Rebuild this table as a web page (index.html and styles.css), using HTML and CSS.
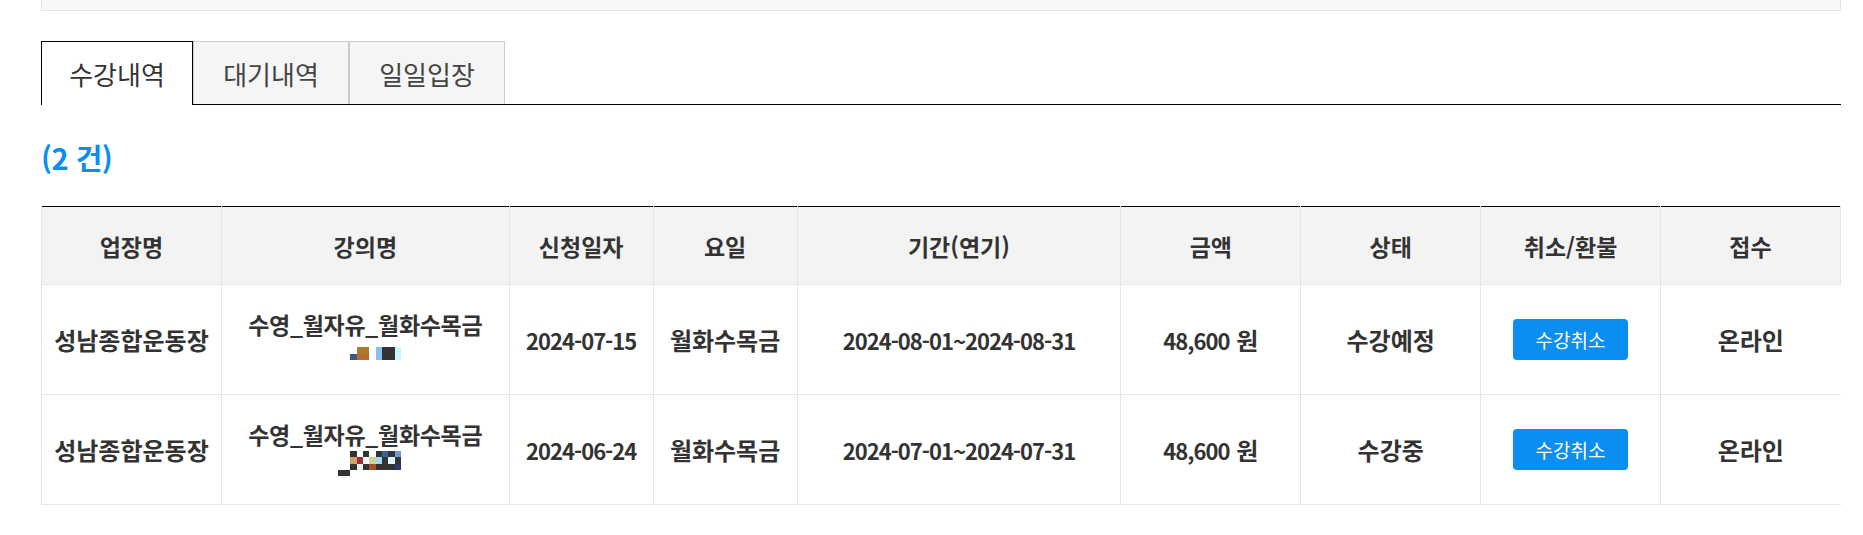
FILE: index.html
```html
<!DOCTYPE html>
<html lang="ko">
<head>
<meta charset="utf-8">
<title>수강내역</title>
<link rel="stylesheet" href="styles.css">
</head>
<body>
<div class="page">
  <div class="search-box"></div>

  <ul class="tabs">
    <li class="tab tab-first active">수강내역</li>
    <li class="tab">대기내역</li>
    <li class="tab">일일입장</li>
  </ul>

  <p class="count">(2 건)</p>

  <table class="list">
    <colgroup>
      <col class="c10"><col class="c16"><col class="c8"><col class="c8"><col class="c18">
      <col class="c10"><col class="c10"><col class="c10"><col class="c10">
    </colgroup>
    <thead>
      <tr>
        <th>업장명</th><th>강의명</th><th>신청일자</th><th>요일</th><th>기간(연기)</th>
        <th>금액</th><th>상태</th><th>취소/환불</th><th>접수</th>
      </tr>
    </thead>
    <tbody>
      <tr>
        <td>성남종합운동장</td>
        <td>
          <div class="lecture">수영_월자유_월화수목금</div>
          <svg class="mosaic" width="72" height="25" viewBox="-1.4 0 11.4 4" preserveAspectRatio="none" shape-rendering="crispEdges">
            <rect x="3" y="1" width="2" height="1" fill="#a87a30"/>
            <rect x="2" y="2" width="1" height="1" fill="#3a5a8a"/>
            <rect x="3" y="2" width="2" height="1" fill="#b86a30"/>
            <rect x="6" y="1" width="1" height="2" fill="#8ac0f0"/>
            <rect x="7" y="1" width="2" height="2" fill="#333"/>
            <rect x="9" y="1" width="1" height="2" fill="#c8f8ff"/>
          </svg>
        </td>
        <td><span class="num">2024-07-15</span></td>
        <td>월화수목금</td>
        <td><span class="num">2024-08-01~2024-08-31</span></td>
        <td><span class="num">48,600</span> 원</td>
        <td>수강예정</td>
        <td><button class="btn-cancel" type="button">수강취소</button></td>
        <td>온라인</td>
      </tr>
      <tr>
        <td>성남종합운동장</td>
        <td>
          <div class="lecture">수영_월자유_월화수목금</div>
          <svg class="mosaic" width="72" height="25" viewBox="-1.4 0 11.4 4" preserveAspectRatio="none" shape-rendering="crispEdges">
            <rect x="2" y="0" width="1" height="1" fill="#333"/>
            <rect x="4" y="0" width="1" height="1" fill="#333"/>
            <rect x="6" y="0" width="1" height="1" fill="#333"/>
            <rect x="7" y="0" width="1" height="1" fill="#3a5f9a"/>
            <rect x="8" y="0" width="1" height="1" fill="#333"/>
            <rect x="9" y="0" width="1" height="1" fill="#6a9ad8"/>
            <rect x="2" y="1" width="1" height="1" fill="#d0a070"/>
            <rect x="3" y="1" width="1" height="1" fill="#a03030"/>
            <rect x="5" y="1" width="1" height="1" fill="#d0d0a0"/>
            <rect x="6" y="1" width="1" height="1" fill="#a0d8f0"/>
            <rect x="7" y="1" width="1" height="1" fill="#333"/>
            <rect x="8" y="1" width="1" height="1" fill="#e0fafa"/>
            <rect x="9" y="1" width="1" height="1" fill="#333"/>
            <rect x="2" y="2" width="1" height="1" fill="#333"/>
            <rect x="3" y="2" width="1" height="1" fill="#e8f8e8"/>
            <rect x="4" y="2" width="1" height="1" fill="#333"/>
            <rect x="5" y="2" width="1" height="1" fill="#a05030"/>
            <rect x="6" y="2" width="3" height="1" fill="#333"/>
            <rect x="9" y="2" width="1" height="1" fill="#303870"/>
            <rect x="0" y="3" width="2" height="1" fill="#333"/>
          </svg>
        </td>
        <td><span class="num">2024-06-24</span></td>
        <td>월화수목금</td>
        <td><span class="num">2024-07-01~2024-07-31</span></td>
        <td><span class="num">48,600</span> 원</td>
        <td>수강중</td>
        <td><button class="btn-cancel" type="button">수강취소</button></td>
        <td>온라인</td>
      </tr>
    </tbody>
  </table>
</div>
</body>
</html>
```

FILE: styles.css
```css
html, body {
  margin: 0;
  padding: 0;
  background: #fff;
}

body {
  font-family: "Noto Sans CJK KR", "Noto Sans", sans-serif;
  color: #333;
}

.page {
  width: 1800px;
  margin-left: 41px;
}

.search-box {
  height: 10px;
  background: #f8f8f8;
  border: 1px solid #e3e3e3;
  border-top: 0;
}

.tabs {
  display: flex;
  align-items: flex-start;
  margin: 30px 0 0;
  padding: 0;
  list-style: none;
  border-bottom: 1px solid #000;
}

.tab {
  box-sizing: border-box;
  width: 156px;
  height: 63px;
  display: flex;
  align-items: center;
  justify-content: center;
  background: #f5f5f5;
  border: 1px solid #ccc;
  border-bottom: 0;
  font-size: 26px;
  color: #444;
}

.tab.tab-first {
  width: 152px;
}

.tab.active {
  height: 64px;
  margin-bottom: -1px;
  background: #fff;
  border-color: #000;
  color: #333;
}

.count {
  margin: 34px 0 31px;
  font-size: 29px;
  line-height: 36px;
  font-weight: 700;
  color: #0a8ef2;
  letter-spacing: -0.5px;
}

.list {
  width: 1800px;
  table-layout: fixed;
  border-collapse: collapse;
  border-top: 1px solid #000;
}

.c10 { width: 10%; }
.c16 { width: 16%; }
.c8 { width: 8%; }
.c18 { width: 18%; }

.list th,
.list td {
  padding: 0;
  text-align: center;
  vertical-align: middle;
  font-weight: 700;
  color: #333;
  border-left: 1px solid #e5e5e5;
  border-bottom: 1px solid #e5e5e5;
}

.list th {
  height: 77px;
  font-size: 23px;
  background: #f3f3f3;
}

.list th:last-child {
  border-right: 1px solid #e5e5e5;
}

.list td {
  height: 109px;
  font-size: 24px;
  line-height: 29px;
}

.num {
  font-size: 22px;
  letter-spacing: -1px;
}

.lecture {
  font-size: 23px;
  line-height: 29px;
  letter-spacing: -0.3px;
}

.mosaic {
  display: block;
  margin: 2px auto 3px;
}

.btn-cancel {
  width: 115px;
  height: 41px;
  padding: 0;
  border: 0;
  border-radius: 4px;
  background: #0a8ef2;
  color: #fff;
  font-family: "Noto Sans CJK KR", sans-serif;
  font-size: 19px;
  font-weight: 400;
  cursor: pointer;
}
```
